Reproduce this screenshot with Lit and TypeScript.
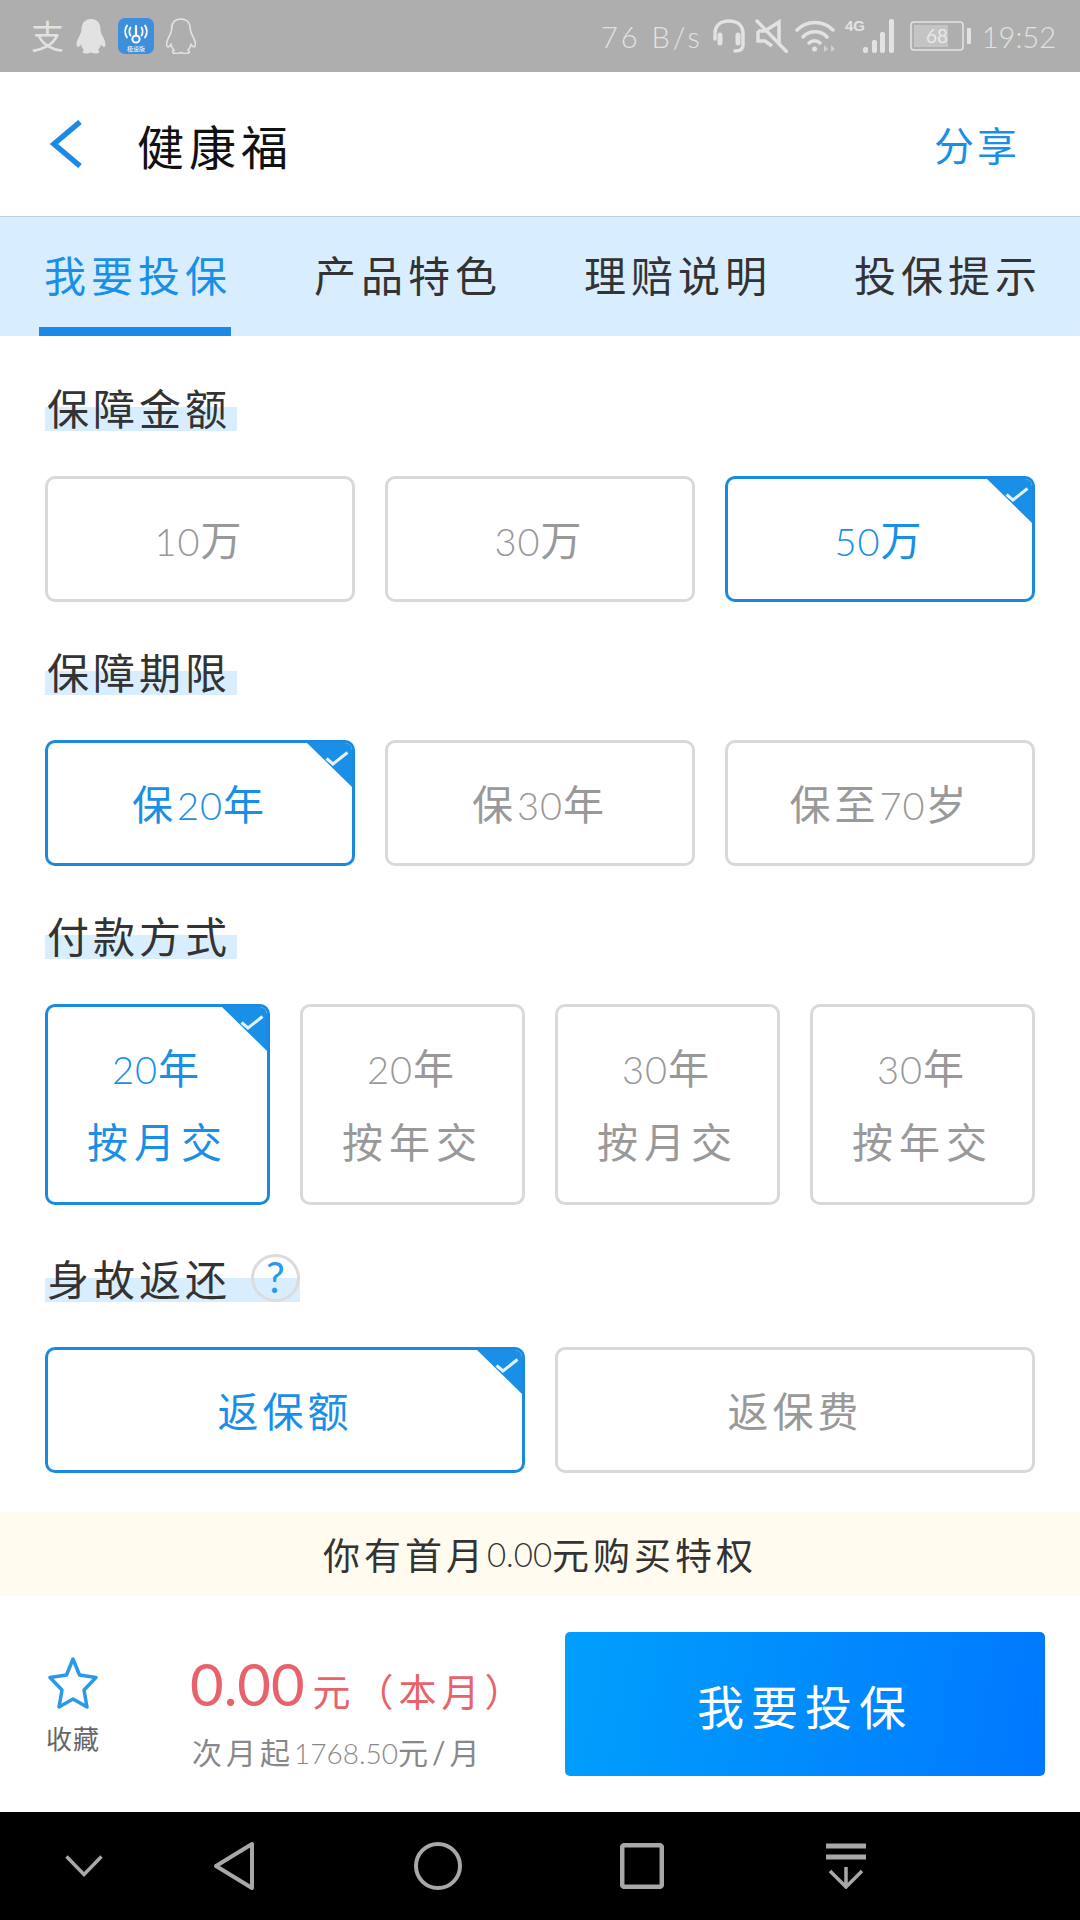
import { LitElement, html, css } from "lit";
import { customElement } from "lit/decorators.js";
import { classMap } from "lit/directives/class-map.js";

const PENGUIN =
  "M15 1C8 1 5.5 6 5.5 12C5.5 15 3 18 1.5 22C0 26 .5 29 2 29C3 29 4 28 5 26.5C5.5 29 7 31 8 32C6 33 6 35.5 10 35.5C12 35.5 14 35 15 34.5C16 35 18 35.5 20 35.5C24 35.5 24 33 22 32C23 31 24.5 29 25 26.5C26 28 27 29 28 29C29.5 29 30 26 28.5 22C27 18 24.5 15 24.5 12C24.5 6 22 1 15 1Z";

interface Section {
  title: string;
  help?: boolean;
  cols: number;
  options: string[][];
  selected: number;
}

const SECTIONS: Section[] = [
  { title: "保障金额", cols: 3, options: [["10万"], ["30万"], ["50万"]], selected: 2 },
  { title: "保障期限", cols: 3, options: [["保20年"], ["保30年"], ["保至70岁"]], selected: 0 },
  {
    title: "付款方式",
    cols: 4,
    options: [
      ["20年", "按月交"],
      ["20年", "按年交"],
      ["30年", "按月交"],
      ["30年", "按年交"],
    ],
    selected: 0,
  },
  { title: "身故返还", help: true, cols: 2, options: [["返保额"], ["返保费"]], selected: 0 },
];

// digits are set thinner and smaller than the chinese around them
const mixed = (text: string) =>
  text
    .split(/([0-9.]+)/)
    .map((part, i) => (i % 2 ? html`<span class="num">${part}</span>` : part));

@customElement("app-root")
export class AppRoot extends LitElement {
  static styles = css`
    :host {
      display: flex;
      flex-direction: column;
      width: 1080px;
      height: 1920px;
      background: #fff;
      font-family: Lato, "Noto Sans CJK SC", sans-serif;
      font-feature-settings: "lnum";
      color: #333;
      overflow: hidden;
    }

    .status {
      flex: none;
      height: 72px;
      box-sizing: border-box;
      padding: 0 24px 0 31px;
      background: #aeaeae;
      color: #e2e2e2;
      display: flex;
      align-items: center;
      justify-content: space-between;
    }
    .status-left,
    .status-right {
      display: flex;
      align-items: center;
    }
    .status-left {
      gap: 12px;
    }
    .status svg {
      display: block;
    }
    .pay {
      width: 33px;
      font-size: 33px;
      line-height: 36px;
    }
    .speed {
      font-size: 29px;
      font-weight: 300;
      letter-spacing: 3px;
      margin-right: 10px;
      white-space: nowrap;
    }
    .clock {
      font-size: 29px;
      font-weight: 300;
      margin-left: 11px;
    }
    .mute {
      margin: 0 7px 0 10px;
    }
    .signal {
      margin: 0 12px 0 8px;
    }

    .header {
      flex: none;
      height: 144px;
      box-sizing: border-box;
      padding: 0 60px 0 50px;
      display: flex;
      align-items: center;
    }
    .header h1 {
      margin: 0 0 0 55px;
      flex: 1;
      font-size: 47px;
      font-weight: 400;
      letter-spacing: 5px;
      color: #111;
    }
    .share {
      font-size: 40px;
      letter-spacing: 3px;
      color: #1a8fe8;
    }

    .tabs {
      flex: none;
      height: 120px;
      box-sizing: border-box;
      padding-left: 39px;
      background: #d8eeff;
      border-top: 1px solid #bccfdd;
      display: flex;
      gap: 78px;
    }
    .tab {
      width: 192px;
      box-sizing: border-box;
      padding-left: 5px;
      font-size: 42px;
      letter-spacing: 5px;
      line-height: 119px;
      white-space: nowrap;
      color: #333;
    }
    .tab.active {
      color: #1a8fe8;
      border-bottom: 9px solid #1a8ae6;
    }

    .content {
      flex: 1;
      box-sizing: border-box;
      padding: 52px 45px 0;
    }
    .section {
      margin-bottom: 50px;
    }
    .section.wide-gap {
      margin-bottom: 54px;
    }
    .section:last-child {
      margin-bottom: 0;
    }
    .title {
      display: flex;
      align-items: flex-end;
      height: 43px;
      width: 192px;
      box-sizing: border-box;
      padding-left: 2px;
      font-size: 42px;
      letter-spacing: 4px;
      line-height: 43px;
      white-space: nowrap;
      background: linear-gradient(transparent 44%, #d8eeff 44%);
      color: #333;
    }
    .title.has-help {
      width: 255px;
    }
    .help {
      flex: none;
      width: 49px;
      height: 48px;
      box-sizing: border-box;
      margin-left: 20px;
      border: 3px solid #dcdcdc;
      border-radius: 50%;
      color: #2a9ae8;
      font-size: 42px;
      letter-spacing: 0;
      line-height: 41px;
      text-align: center;
    }
    .options {
      display: grid;
      gap: 30px;
      margin-top: 45px;
    }
    .option {
      position: relative;
      height: 126px;
      box-sizing: border-box;
      padding-top: 3px;
      border: 3px solid #d9d9d9;
      border-radius: 10px;
      overflow: hidden;
      display: flex;
      flex-direction: column;
      align-items: center;
      justify-content: center;
      font-size: 41px;
      letter-spacing: 4px;
      color: #999;
    }
    .option.tall {
      height: 201px;
      gap: 24px;
    }
    .option.selected {
      border-color: #1a8ae0;
      color: #1a8fe8;
    }
    .option .line {
      line-height: 50px;
    }
    .option .wide {
      letter-spacing: 6px;
    }
    .option .num {
      font-size: 38px;
      font-weight: 300;
      letter-spacing: 1px;
    }
    .corner {
      position: absolute;
      top: 0;
      right: 0;
      width: 45px;
      height: 44px;
      background: #1a8fe8;
      clip-path: polygon(0 0, 100% 0, 100% 100%);
    }
    .tick {
      position: absolute;
      top: 8px;
      right: 3px;
    }

    .banner {
      flex: none;
      height: 84px;
      background: #fffcef;
      display: flex;
      align-items: center;
      justify-content: center;
      font-size: 37px;
      letter-spacing: 4px;
      color: #333;
      white-space: pre;
    }
    .banner .num {
      font-size: 33px;
      font-weight: 300;
      letter-spacing: 0;
    }

    .footer {
      flex: none;
      height: 216px;
      box-sizing: border-box;
      padding: 36px 35px 36px 47px;
      display: flex;
      align-items: center;
    }
    .fav {
      width: 52px;
      padding-top: 3px;
      display: flex;
      flex-direction: column;
      align-items: center;
      gap: 9px;
      font-size: 26px;
      letter-spacing: 1px;
      color: #666;
      white-space: nowrap;
    }
    .price {
      flex: 1;
      margin-left: 91px;
      padding-top: 16px;
    }
    .amount {
      display: flex;
      align-items: baseline;
      color: #e8626c;
      font-size: 38px;
      line-height: 64px;
      white-space: nowrap;
    }
    .amount b {
      font-size: 58px;
      font-weight: 400;
      margin-right: 8px;
    }
    .amount span {
      letter-spacing: 5px;
    }
    .next {
      margin-top: 6px;
      padding-left: 2px;
      font-size: 30px;
      letter-spacing: 4px;
      color: #888;
      white-space: nowrap;
    }
    .next .num {
      font-size: 28px;
      font-weight: 300;
      letter-spacing: 0;
    }
    .buy {
      width: 480px;
      height: 144px;
      border-radius: 5px;
      background: linear-gradient(100deg, #00a0fc, #0078ff);
      color: #fff;
      display: flex;
      align-items: center;
      justify-content: center;
      font-size: 47px;
      letter-spacing: 7px;
    }

    .nav {
      flex: none;
      height: 108px;
      box-sizing: border-box;
      padding-left: 60px;
      background: #000;
      display: flex;
      align-items: center;
    }
    .nav-first {
      width: 48px;
      margin-right: 24px;
      display: flex;
      justify-content: center;
    }
    .nav-item {
      width: 204px;
      display: flex;
      justify-content: center;
    }
  `;

  private _statusLeft() {
    return html`<div class="status-left">
      <span class="pay">支</span>
      <svg width="30" height="36" viewBox="0 0 30 36"><path d=${PENGUIN} fill="#e2e2e2" /></svg>
      <svg width="36" height="36" viewBox="0 0 36 36">
        <rect width="36" height="36" rx="7" fill="#3d8fdc" />
        <g fill="none" stroke="#fff" stroke-width="1.8" stroke-linecap="round">
          <path d="M9 7.5c-2.5 4-2.5 8 0 12M27 7.5c2.5 4 2.5 8 0 12" />
          <path d="M12.5 9.5c-1.5 2.5-1.5 5.5 0 8M23.5 9.5c1.5 2.5 1.5 5.5 0 8" />
          <path d="M18 8v10" stroke-width="2.2" />
          <circle cx="18" cy="21" r="3.6" stroke-width="2" />
        </g>
        <text x="18" y="33" text-anchor="middle" font-size="6" fill="#fff" font-family="Noto Sans CJK SC">极速版</text>
      </svg>
      <svg width="30" height="36" viewBox="0 0 30 36">
        <path d=${PENGUIN} fill="none" stroke="#e2e2e2" stroke-width="1.6" />
      </svg>
    </div>`;
  }

  private _statusRight() {
    return html`<div class="status-right">
      <span class="speed">76 B/s</span>
      <svg width="32" height="34" viewBox="0 0 32 34" fill="none" stroke="#e2e2e2" stroke-linecap="round">
        <path d="M2 20V15C2 6 8 2 16 2S30 6 30 15V26C30 30 27 32 22 32" stroke-width="3.5" />
        <path d="M7 16V24M25 16V24" stroke-width="5" />
      </svg>
      <svg class="mute" width="33" height="34" viewBox="0 0 33 34">
        <path d="M3 12H10L24 3V25M3 12V22H10L17 27" fill="none" stroke="#e2e2e2" stroke-width="3.5" />
        <path d="M2 2L32 33" stroke="#e2e2e2" stroke-width="3.5" stroke-linecap="round" />
      </svg>
      <svg width="42" height="34" viewBox="0 0 42 34" fill="none" stroke="#e2e2e2" stroke-width="3.5" stroke-linecap="round">
        <path d="M2 11C12 1 28 1 38 11M8 18C14 11 26 11 32 18M14 24C17 21 22 21 25 24" />
        <circle cx="19.5" cy="30" r="2.5" fill="#e2e2e2" stroke="none" />
        <path d="M29 33V26L33 30ZM36 33V26L40 30Z" fill="#d0d0d0" stroke="none" />
      </svg>
      <svg class="signal" width="53" height="36" viewBox="0 0 53 36">
        <text x="0" y="13" font-size="15" font-weight="700" fill="#e2e2e2" font-family="Liberation Sans">4G</text>
        <g fill="#e2e2e2">
          <rect x="18" y="29" width="5" height="6" rx="2" />
          <rect x="27" y="22" width="5" height="13" rx="2" />
          <rect x="35" y="14" width="5" height="21" rx="2" />
          <rect x="44" y="1" width="5" height="34" rx="2" />
        </g>
      </svg>
      <svg width="61" height="30" viewBox="0 0 61 30">
        <rect x="1" y="1" width="52" height="28" rx="3" fill="none" stroke="#e2e2e2" stroke-width="1.6" />
        <rect x="4" y="4" width="34" height="22" fill="#c4c4c4" />
        <rect x="57" y="7" width="4" height="16" rx="1" fill="#e2e2e2" />
        <text x="27" y="22" text-anchor="middle" font-size="19" fill="#e8e8e8" font-family="Lato">68</text>
      </svg>
      <span class="clock">19:52</span>
    </div>`;
  }

  private _option(lines: string[], selected: boolean) {
    return html`<div class=${classMap({ option: true, selected, tall: lines.length > 1 })}>
      ${lines.map(
        (l, i) => html`<span class=${classMap({ line: true, wide: i === 1 })}>${mixed(l)}</span>`
      )}
      ${selected
        ? html`<span class="corner"></span>
            <svg class="tick" width="24" height="15" viewBox="0 0 24 15" fill="none">
              <path d="M1.5 7.5L8 13L22.5 1.5" stroke="#e4f3ff" stroke-width="3" />
            </svg>`
        : null}
    </div>`;
  }

  private _section(s: Section, i: number) {
    return html`<section class=${classMap({ section: true, "wide-gap": i === 2 })}>
      <div class=${classMap({ title: true, "has-help": !!s.help })}>
        ${s.title}${s.help ? html`<span class="help">?</span>` : null}
      </div>
      <div class="options" style="grid-template-columns: repeat(${s.cols}, 1fr)">
        ${s.options.map((o, j) => this._option(o, j === s.selected))}
      </div>
    </section>`;
  }

  private _navIcons() {
    const grey = "#a8a8a8";
    return html`<div class="nav-first">
        <svg width="38" height="22" viewBox="0 0 38 22" fill="none" stroke=${grey} stroke-width="3.5">
          <path d="M1.5 1.5L19 19.5L36.5 1.5" />
        </svg>
      </div>
      <div class="nav-item">
        <svg width="42" height="50" viewBox="0 0 42 50" fill="none" stroke=${grey} stroke-width="4" stroke-linejoin="round">
          <path d="M39 3V47L3 25Z" />
        </svg>
      </div>
      <div class="nav-item">
        <svg width="48" height="48" viewBox="0 0 48 48" fill="none" stroke=${grey} stroke-width="4">
          <circle cx="24" cy="24" r="22" />
        </svg>
      </div>
      <div class="nav-item">
        <svg width="44" height="46" viewBox="0 0 44 46" fill="none" stroke=${grey} stroke-width="4.5">
          <rect x="2.2" y="2.2" width="39.6" height="41.6" rx="2" />
        </svg>
      </div>
      <div class="nav-item">
        <svg width="42" height="46" viewBox="0 0 42 46" fill="none" stroke=${grey}>
          <path d="M1 3H41M1 14H41" stroke-width="5" />
          <path d="M21 24V44M5 28L21 44L37 28" stroke-width="3.5" />
        </svg>
      </div>`;
  }

  render() {
    return html`
      <div class="status">${this._statusLeft()}${this._statusRight()}</div>

      <header class="header">
        <svg width="32" height="48" viewBox="0 0 32 48" fill="none" stroke="#1a8ae6" stroke-width="5.5">
          <path d="M30 2L4 24L30 46" />
        </svg>
        <h1>健康福</h1>
        <span class="share">分享</span>
      </header>

      <nav class="tabs">
        <div class="tab active">我要投保</div>
        <div class="tab">产品特色</div>
        <div class="tab">理赔说明</div>
        <div class="tab">投保提示</div>
      </nav>

      <main class="content">${SECTIONS.map((s, i) => this._section(s, i))}</main>

      <div class="banner">${mixed("你有首月0.00元购买特权")}</div>

      <footer class="footer">
        <div class="fav">
          <svg width="50" height="54" viewBox="0 0 50 54" fill="none" stroke="#2a9ae8" stroke-width="3.5" stroke-linejoin="round">
            <path d="M25 3L31.5 19L48 21.5L36 34L39 51L25 43L11 51L14 34L2 21.5L18.5 19Z" />
          </svg>
          <span>收藏</span>
        </div>
        <div class="price">
          <div class="amount"><b>0.00</b><span>元（本月）</span></div>
          <div class="next">${mixed("次月起1768.50元/月")}</div>
        </div>
        <div class="buy">我要投保</div>
      </footer>

      <div class="nav">${this._navIcons()}</div>
    `;
  }
}

declare global {
  interface HTMLElementTagNameMap {
    "app-root": AppRoot;
  }
}
